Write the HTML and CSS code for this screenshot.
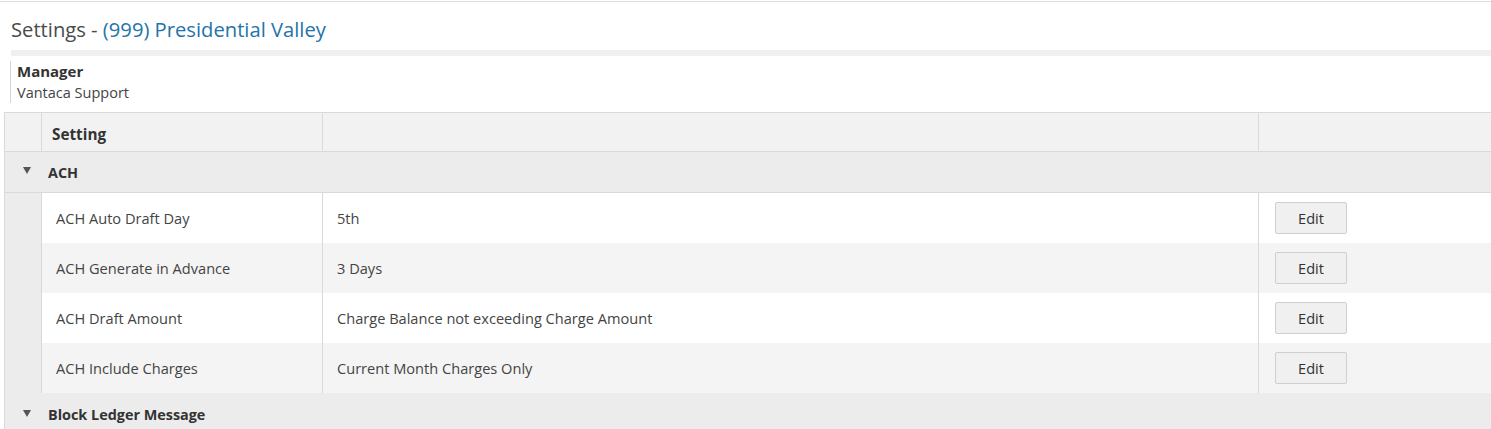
FILE: index.html
```html
<!DOCTYPE html>
<html lang="en">
<head>
    <meta charset="UTF-8">
    <meta name="viewport" content="width=device-width, initial-scale=1.0">
    <title>Settings - (999) Presidential Valley</title>
    <link rel="stylesheet" href="styles.css">
</head>
<body>
    <div class="page">
        <h1 class="page-title">Settings - <a href="#">(999) Presidential Valley</a></h1>
        <div class="title-bar"></div>

        <div class="manager">
            <div class="manager-label">Manager</div>
            <div class="manager-name">Vantaca Support</div>
        </div>

        <div class="settings-grid">
            <div class="grid-row grid-head">
                <div class="cell cell-toggle"></div>
                <div class="cell cell-name">Setting</div>
                <div class="cell cell-value"></div>
                <div class="cell cell-action"></div>
            </div>

            <div class="group-row">
                <span class="caret"><svg viewBox="0 0 8 7"><polygon points="0,0 8,0 4,7" /></svg></span>
                <span class="group-name">ACH</span>
            </div>

            <div class="grid-row data-row">
                <div class="cell cell-toggle"></div>
                <div class="cell cell-name">ACH Auto Draft Day</div>
                <div class="cell cell-value">5th</div>
                <div class="cell cell-action"><button class="btn-edit">Edit</button></div>
            </div>
            <div class="grid-row data-row alt">
                <div class="cell cell-toggle"></div>
                <div class="cell cell-name">ACH Generate in Advance</div>
                <div class="cell cell-value">3 Days</div>
                <div class="cell cell-action"><button class="btn-edit">Edit</button></div>
            </div>
            <div class="grid-row data-row">
                <div class="cell cell-toggle"></div>
                <div class="cell cell-name">ACH Draft Amount</div>
                <div class="cell cell-value">Charge Balance not exceeding Charge Amount</div>
                <div class="cell cell-action"><button class="btn-edit">Edit</button></div>
            </div>
            <div class="grid-row data-row alt">
                <div class="cell cell-toggle"></div>
                <div class="cell cell-name">ACH Include Charges</div>
                <div class="cell cell-value">Current Month Charges Only</div>
                <div class="cell cell-action"><button class="btn-edit">Edit</button></div>
            </div>

            <div class="group-row">
                <span class="caret"><svg viewBox="0 0 8 7"><polygon points="0,0 8,0 4,7" /></svg></span>
                <span class="group-name">Block Ledger Message</span>
            </div>
        </div>
    </div>
</body>
</html>
```

FILE: styles.css
```css
:root {
    --text: #444;
    --heading: #333;
    --link: #2474aa;
    --line: #d9d9d9;
    --head-bg: #f2f2f2;
    --group-bg: #ececec;
    --stripe: #f4f4f4;
}

* {
    box-sizing: border-box;
    margin: 0;
    padding: 0;
}

body {
    font-family: 'Open Sans', 'Liberation Sans', sans-serif;
    font-size: 14.6px;
    color: var(--text);
    background: #fff;
    overflow: hidden;
}

.page {
    margin-top: 1px;
    border-top: 1px solid #dcdcdc;
}

.page-title {
    font-size: 20.2px;
    font-weight: 400;
    line-height: 28px;
    color: #4a4a4a;
    padding: 13px 0 0 11px;
}

.page-title a {
    color: var(--link);
    text-decoration: none;
}

.title-bar {
    height: 6px;
    margin: 7px 0 0 11px;
    background: #f0f0f0;
}

.manager {
    margin: 5px 0 0 10px;
    padding-left: 6px;
    border-left: 1px solid #d4d4d4;
    line-height: 21px;
}

.manager-label {
    font-weight: 700;
    font-size: 15px;
    color: var(--heading);
}

.manager-name {
    font-size: 14.5px;
    color: var(--text);
}

.settings-grid {
    margin: 9px 0 0 4px;
    border-top: 1px solid var(--line);
    border-left: 1px solid var(--line);
}

.grid-row {
    display: grid;
    grid-template-columns: 36px 281px 936px 1fr;
}

.cell {
    display: flex;
    align-items: center;
}

.cell + .cell {
    border-left: 1px solid var(--line);
}

.grid-head {
    height: 39px;
    background: var(--head-bg);
    border-bottom: 1px solid var(--line);
}

.grid-head .cell-name {
    padding: 4px 0 0 10px;
    font-weight: 700;
    font-size: 15.3px;
    color: var(--heading);
}

.group-row {
    display: flex;
    align-items: center;
    height: 41px;
    background: var(--group-bg);
    border-bottom: 1px solid var(--line);
    font-weight: 700;
    font-size: 14.4px;
    color: var(--heading);
}

.group-row:last-child {
    border-bottom: none;
    padding-top: 2px;
}

.caret {
    display: flex;
    width: 43px;
    padding: 0 0 3px 18px;
}

.caret svg {
    width: 8px;
    height: 7px;
    fill: #555;
}

.data-row {
    height: 50px;
    background: #fff;
}

.data-row.alt {
    background: var(--stripe);
}

.data-row .cell-toggle {
    background: var(--group-bg);
}

.cell-name,
.cell-value {
    padding-left: 14px;
}

.cell-action {
    padding-left: 16px;
}

.btn-edit {
    width: 72px;
    height: 32px;
    font-family: inherit;
    font-size: 14.6px;
    color: #333;
    background: #f0f0f0;
    border: 1px solid #cfcfcf;
    border-radius: 2px;
    cursor: pointer;
}

.btn-edit:hover {
    background: #e6e6e6;
}
```
